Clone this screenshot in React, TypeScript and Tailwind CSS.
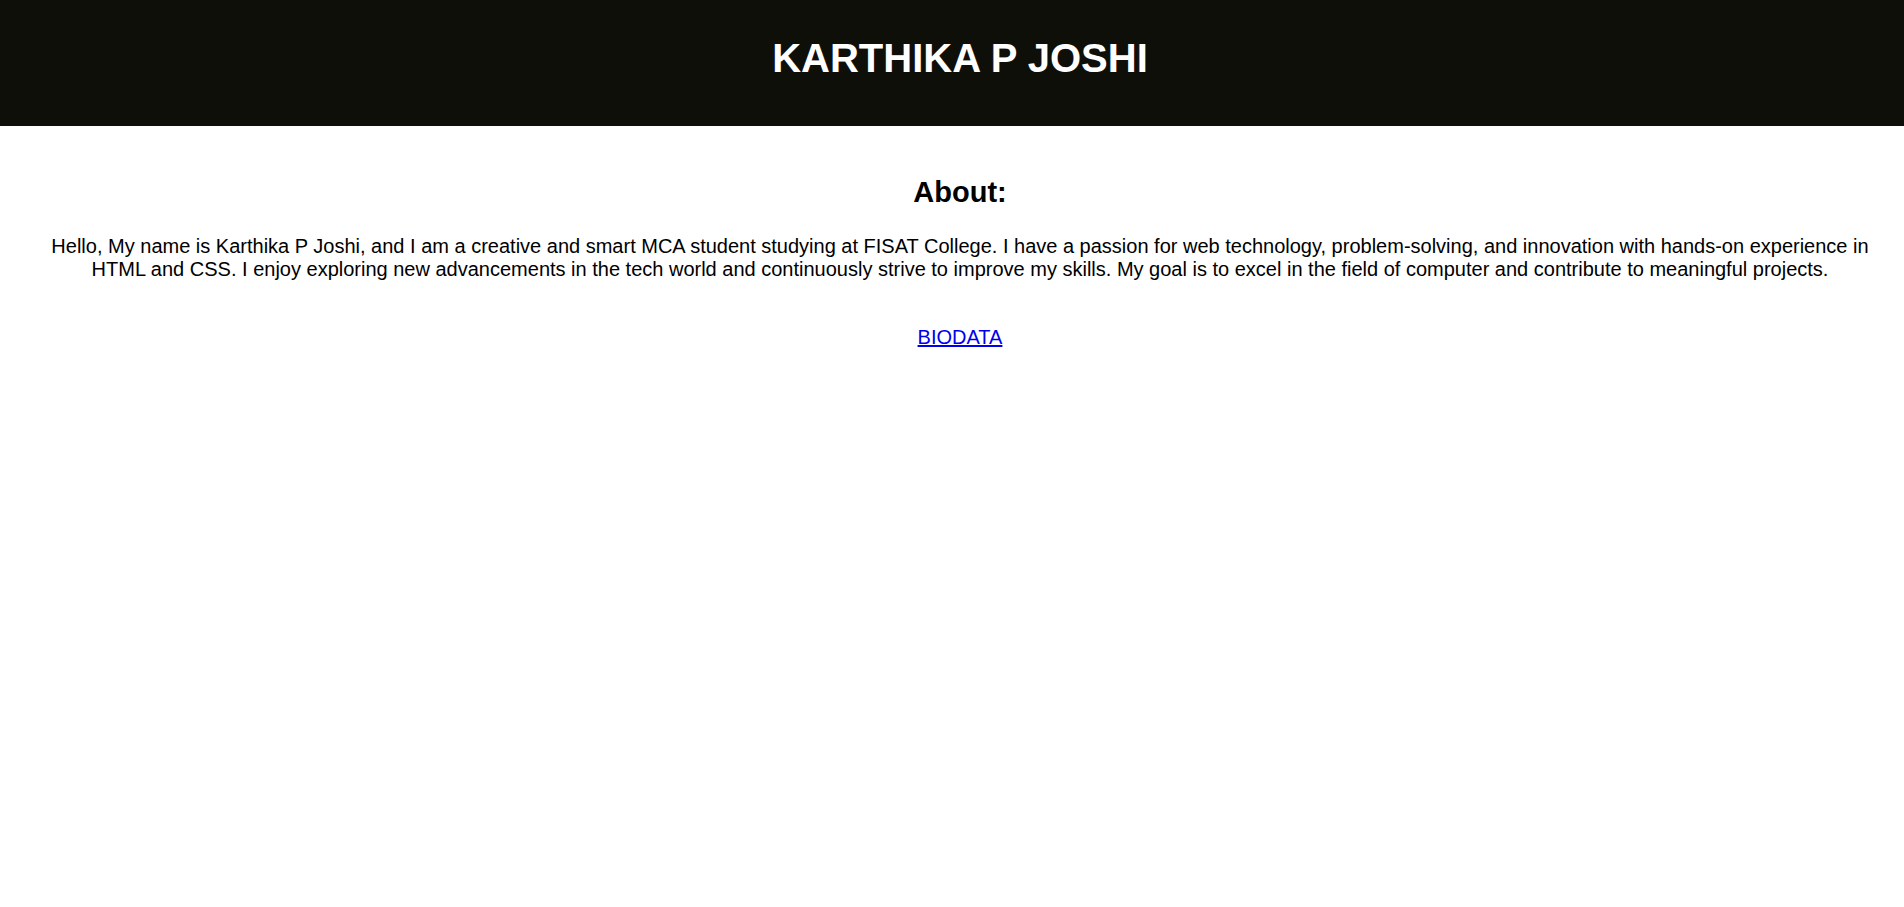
export default function App() {
  return (
    <div className="min-h-screen bg-white" style={{ fontFamily: '"Liberation Sans", Arial, sans-serif' }}>
      <header className="h-[126px] bg-[#0f0f0a] flex items-center justify-center pl-[16px] pb-[10px]">
        <h1 className="text-[40px] font-bold text-white leading-normal">KARTHIKA P JOSHI</h1>
      </header>
      <section className="flex flex-col items-center">
        <h2 className="mt-[45px] pl-[16px] text-[29px] font-bold text-black leading-normal">About:</h2>
        <p className="mt-[20px] w-full pl-[44px] pr-[28px] text-center text-[20px] leading-[23px] text-black">
          Hello, My name is Karthika P Joshi, and I am a creative and smart MCA student studying at FISAT College. I have a passion for web technology, problem-solving, and innovation with hands-on experience in HTML and CSS. I enjoy exploring new advancements in the tech world and continuously strive to improve my skills. My goal is to excel in the field of computer and contribute to meaningful projects.
        </p>
        <a href="#" className="mt-[45px] pl-[16px] text-[20px] leading-[23px] text-[#0000ee] underline">BIODATA</a>
      </section>
    </div>
  );
}
